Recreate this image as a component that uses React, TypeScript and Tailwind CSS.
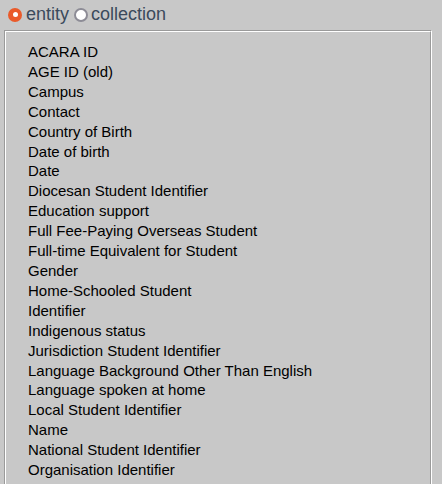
const fields = [
  'ACARA ID',
  'AGE ID (old)',
  'Campus',
  'Contact',
  'Country of Birth',
  'Date of birth',
  'Date',
  'Diocesan Student Identifier',
  'Education support',
  'Full Fee-Paying Overseas Student',
  'Full-time Equivalent for Student',
  'Gender',
  'Home-Schooled Student',
  'Identifier',
  'Indigenous status',
  'Jurisdiction Student Identifier',
  'Language Background Other Than English',
  'Language spoken at home',
  'Local Student Identifier',
  'Name',
  'National Student Identifier',
  'Organisation Identifier',
];

function Radio({ checked }: { checked: boolean }) {
  return checked ? (
    <span className="flex h-[14px] w-[14px] shrink-0 items-center justify-center rounded-full bg-[#ea5a2a]">
      <span className="h-[5px] w-[5px] rounded-full bg-white" />
    </span>
  ) : (
    <span className="block h-[14px] w-[14px] shrink-0 rounded-full border-2 border-[#8d8c96] bg-white" />
  );
}

export default function App() {
  return (
    <div className="h-[484px] overflow-hidden bg-[#c8c8c8] font-['Liberation_Sans',Arial,sans-serif]">
      <div className="flex h-[30px] items-center pl-[8px] pb-[1px] text-[18px] text-[#3b4a5c]">
        <Radio checked />
        <span className="ml-[4px]">entity</span>
        <span className="ml-[5px] flex"><Radio checked={false} /></span>
        <span className="ml-[3px]">collection</span>
      </div>
      <div className="ml-[4px] h-[460px] w-[428px] border-l border-t border-r border-[#9a9a9a] border-r-white">
        <div className="h-full border-l border-t border-r border-white border-r-[#9a9a9a] pl-[22px] pt-[10px] text-[15px] leading-[19.9px] text-black">
          {fields.map((f) => (
            <div key={f}>{f}</div>
          ))}
        </div>
      </div>
    </div>
  );
}
